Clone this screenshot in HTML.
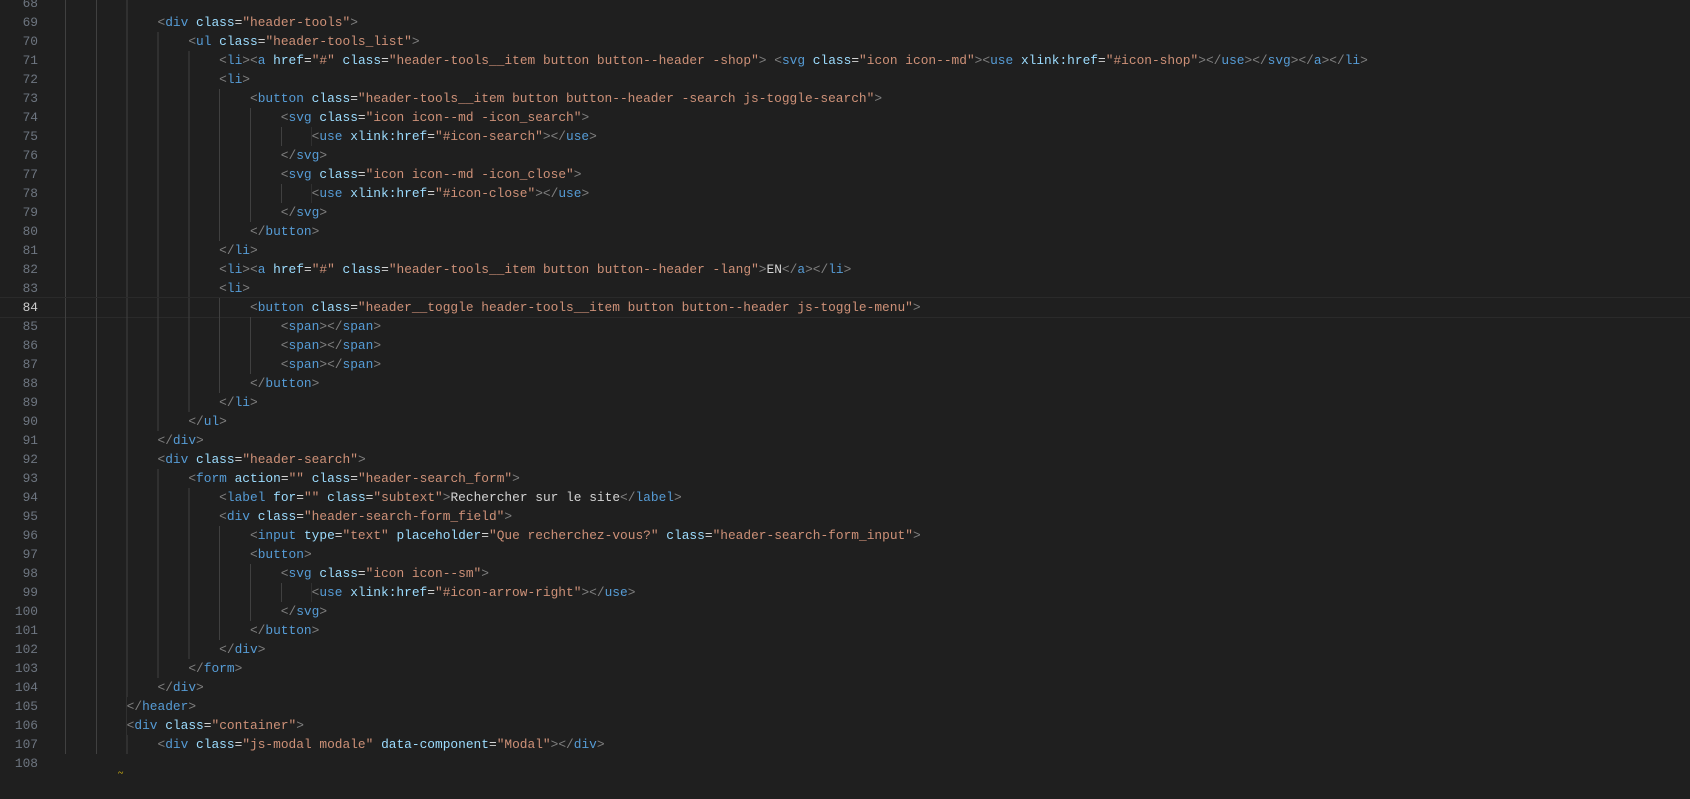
<!DOCTYPE html>
<html><head><meta charset="utf-8"><style>
html,body{margin:0;padding:0;background:#1f1f1f;width:1690px;height:799px;overflow:hidden}
.ed{position:absolute;left:0;top:-6px;width:1690px;font-family:"Liberation Mono",monospace;font-size:12.85px;color:#d4d4d4}
.l{position:relative;height:19px;line-height:19px;white-space:pre}
.n{position:absolute;left:0;width:38px;text-align:right;color:#6e7681}
.c{position:absolute;left:65px}
.g{display:inline-block;height:19px;vertical-align:top;background:repeating-linear-gradient(to right,#404040 0 1px,transparent 1px 4ch)}
.cur{border-top:1px solid #2a2a2a;border-bottom:1px solid #2a2a2a;margin:-1px 0}
.cur .n{color:#cccccc}
.p{color:#808080}.t{color:#569cd6}.a{color:#9cdcfe}.s{color:#ce9178}
.sq{position:absolute;left:118px;top:768px;color:#e2c010;font-size:10px}
</style></head><body>
<div class="ed">
<div class="l"><span class="n">68</span><span class="c"><span class="g" style="width:12ch"></span></span></div>
<div class="l"><span class="n">69</span><span class="c"><span class="g" style="width:12ch"></span><span class="p">&lt;</span><span class="t">div</span> <span class="a">class</span>=<span class="s">"header-tools"</span><span class="p">&gt;</span></span></div>
<div class="l"><span class="n">70</span><span class="c"><span class="g" style="width:16ch"></span><span class="p">&lt;</span><span class="t">ul</span> <span class="a">class</span>=<span class="s">"header-tools_list"</span><span class="p">&gt;</span></span></div>
<div class="l"><span class="n">71</span><span class="c"><span class="g" style="width:20ch"></span><span class="p">&lt;</span><span class="t">li</span><span class="p">&gt;&lt;</span><span class="t">a</span> <span class="a">href</span>=<span class="s">"#"</span> <span class="a">class</span>=<span class="s">"header-tools__item button button--header -shop"</span><span class="p">&gt;</span> <span class="p">&lt;</span><span class="t">svg</span> <span class="a">class</span>=<span class="s">"icon icon--md"</span><span class="p">&gt;&lt;</span><span class="t">use</span> <span class="a">xlink:href</span>=<span class="s">"#icon-shop"</span><span class="p">&gt;&lt;/</span><span class="t">use</span><span class="p">&gt;&lt;/</span><span class="t">svg</span><span class="p">&gt;&lt;/</span><span class="t">a</span><span class="p">&gt;&lt;/</span><span class="t">li</span><span class="p">&gt;</span></span></div>
<div class="l"><span class="n">72</span><span class="c"><span class="g" style="width:20ch"></span><span class="p">&lt;</span><span class="t">li</span><span class="p">&gt;</span></span></div>
<div class="l"><span class="n">73</span><span class="c"><span class="g" style="width:24ch"></span><span class="p">&lt;</span><span class="t">button</span> <span class="a">class</span>=<span class="s">"header-tools__item button button--header -search js-toggle-search"</span><span class="p">&gt;</span></span></div>
<div class="l"><span class="n">74</span><span class="c"><span class="g" style="width:28ch"></span><span class="p">&lt;</span><span class="t">svg</span> <span class="a">class</span>=<span class="s">"icon icon--md -icon_search"</span><span class="p">&gt;</span></span></div>
<div class="l"><span class="n">75</span><span class="c"><span class="g" style="width:32ch"></span><span class="p">&lt;</span><span class="t">use</span> <span class="a">xlink:href</span>=<span class="s">"#icon-search"</span><span class="p">&gt;&lt;/</span><span class="t">use</span><span class="p">&gt;</span></span></div>
<div class="l"><span class="n">76</span><span class="c"><span class="g" style="width:28ch"></span><span class="p">&lt;/</span><span class="t">svg</span><span class="p">&gt;</span></span></div>
<div class="l"><span class="n">77</span><span class="c"><span class="g" style="width:28ch"></span><span class="p">&lt;</span><span class="t">svg</span> <span class="a">class</span>=<span class="s">"icon icon--md -icon_close"</span><span class="p">&gt;</span></span></div>
<div class="l"><span class="n">78</span><span class="c"><span class="g" style="width:32ch"></span><span class="p">&lt;</span><span class="t">use</span> <span class="a">xlink:href</span>=<span class="s">"#icon-close"</span><span class="p">&gt;&lt;/</span><span class="t">use</span><span class="p">&gt;</span></span></div>
<div class="l"><span class="n">79</span><span class="c"><span class="g" style="width:28ch"></span><span class="p">&lt;/</span><span class="t">svg</span><span class="p">&gt;</span></span></div>
<div class="l"><span class="n">80</span><span class="c"><span class="g" style="width:24ch"></span><span class="p">&lt;/</span><span class="t">button</span><span class="p">&gt;</span></span></div>
<div class="l"><span class="n">81</span><span class="c"><span class="g" style="width:20ch"></span><span class="p">&lt;/</span><span class="t">li</span><span class="p">&gt;</span></span></div>
<div class="l"><span class="n">82</span><span class="c"><span class="g" style="width:20ch"></span><span class="p">&lt;</span><span class="t">li</span><span class="p">&gt;&lt;</span><span class="t">a</span> <span class="a">href</span>=<span class="s">"#"</span> <span class="a">class</span>=<span class="s">"header-tools__item button button--header -lang"</span><span class="p">&gt;</span>EN<span class="p">&lt;/</span><span class="t">a</span><span class="p">&gt;&lt;/</span><span class="t">li</span><span class="p">&gt;</span></span></div>
<div class="l"><span class="n">83</span><span class="c"><span class="g" style="width:20ch"></span><span class="p">&lt;</span><span class="t">li</span><span class="p">&gt;</span></span></div>
<div class="l cur"><span class="n">84</span><span class="c"><span class="g" style="width:24ch"></span><span class="p">&lt;</span><span class="t">button</span> <span class="a">class</span>=<span class="s">"header__toggle header-tools__item button button--header js-toggle-menu"</span><span class="p">&gt;</span></span></div>
<div class="l"><span class="n">85</span><span class="c"><span class="g" style="width:28ch"></span><span class="p">&lt;</span><span class="t">span</span><span class="p">&gt;&lt;/</span><span class="t">span</span><span class="p">&gt;</span></span></div>
<div class="l"><span class="n">86</span><span class="c"><span class="g" style="width:28ch"></span><span class="p">&lt;</span><span class="t">span</span><span class="p">&gt;&lt;/</span><span class="t">span</span><span class="p">&gt;</span></span></div>
<div class="l"><span class="n">87</span><span class="c"><span class="g" style="width:28ch"></span><span class="p">&lt;</span><span class="t">span</span><span class="p">&gt;&lt;/</span><span class="t">span</span><span class="p">&gt;</span></span></div>
<div class="l"><span class="n">88</span><span class="c"><span class="g" style="width:24ch"></span><span class="p">&lt;/</span><span class="t">button</span><span class="p">&gt;</span></span></div>
<div class="l"><span class="n">89</span><span class="c"><span class="g" style="width:20ch"></span><span class="p">&lt;/</span><span class="t">li</span><span class="p">&gt;</span></span></div>
<div class="l"><span class="n">90</span><span class="c"><span class="g" style="width:16ch"></span><span class="p">&lt;/</span><span class="t">ul</span><span class="p">&gt;</span></span></div>
<div class="l"><span class="n">91</span><span class="c"><span class="g" style="width:12ch"></span><span class="p">&lt;/</span><span class="t">div</span><span class="p">&gt;</span></span></div>
<div class="l"><span class="n">92</span><span class="c"><span class="g" style="width:12ch"></span><span class="p">&lt;</span><span class="t">div</span> <span class="a">class</span>=<span class="s">"header-search"</span><span class="p">&gt;</span></span></div>
<div class="l"><span class="n">93</span><span class="c"><span class="g" style="width:16ch"></span><span class="p">&lt;</span><span class="t">form</span> <span class="a">action</span>=<span class="s">""</span> <span class="a">class</span>=<span class="s">"header-search_form"</span><span class="p">&gt;</span></span></div>
<div class="l"><span class="n">94</span><span class="c"><span class="g" style="width:20ch"></span><span class="p">&lt;</span><span class="t">label</span> <span class="a">for</span>=<span class="s">""</span> <span class="a">class</span>=<span class="s">"subtext"</span><span class="p">&gt;</span>Rechercher sur le site<span class="p">&lt;/</span><span class="t">label</span><span class="p">&gt;</span></span></div>
<div class="l"><span class="n">95</span><span class="c"><span class="g" style="width:20ch"></span><span class="p">&lt;</span><span class="t">div</span> <span class="a">class</span>=<span class="s">"header-search-form_field"</span><span class="p">&gt;</span></span></div>
<div class="l"><span class="n">96</span><span class="c"><span class="g" style="width:24ch"></span><span class="p">&lt;</span><span class="t">input</span> <span class="a">type</span>=<span class="s">"text"</span> <span class="a">placeholder</span>=<span class="s">"Que recherchez-vous?"</span> <span class="a">class</span>=<span class="s">"header-search-form_input"</span><span class="p">&gt;</span></span></div>
<div class="l"><span class="n">97</span><span class="c"><span class="g" style="width:24ch"></span><span class="p">&lt;</span><span class="t">button</span><span class="p">&gt;</span></span></div>
<div class="l"><span class="n">98</span><span class="c"><span class="g" style="width:28ch"></span><span class="p">&lt;</span><span class="t">svg</span> <span class="a">class</span>=<span class="s">"icon icon--sm"</span><span class="p">&gt;</span></span></div>
<div class="l"><span class="n">99</span><span class="c"><span class="g" style="width:32ch"></span><span class="p">&lt;</span><span class="t">use</span> <span class="a">xlink:href</span>=<span class="s">"#icon-arrow-right"</span><span class="p">&gt;&lt;/</span><span class="t">use</span><span class="p">&gt;</span></span></div>
<div class="l"><span class="n">100</span><span class="c"><span class="g" style="width:28ch"></span><span class="p">&lt;/</span><span class="t">svg</span><span class="p">&gt;</span></span></div>
<div class="l"><span class="n">101</span><span class="c"><span class="g" style="width:24ch"></span><span class="p">&lt;/</span><span class="t">button</span><span class="p">&gt;</span></span></div>
<div class="l"><span class="n">102</span><span class="c"><span class="g" style="width:20ch"></span><span class="p">&lt;/</span><span class="t">div</span><span class="p">&gt;</span></span></div>
<div class="l"><span class="n">103</span><span class="c"><span class="g" style="width:16ch"></span><span class="p">&lt;/</span><span class="t">form</span><span class="p">&gt;</span></span></div>
<div class="l"><span class="n">104</span><span class="c"><span class="g" style="width:12ch"></span><span class="p">&lt;/</span><span class="t">div</span><span class="p">&gt;</span></span></div>
<div class="l"><span class="n">105</span><span class="c"><span class="g" style="width:8ch"></span><span class="p">&lt;/</span><span class="t">header</span><span class="p">&gt;</span></span></div>
<div class="l"><span class="n">106</span><span class="c"><span class="g" style="width:8ch"></span><span class="p">&lt;</span><span class="t">div</span> <span class="a">class</span>=<span class="s">"container"</span><span class="p">&gt;</span></span></div>
<div class="l"><span class="n">107</span><span class="c"><span class="g" style="width:12ch"></span><span class="p">&lt;</span><span class="t">div</span> <span class="a">class</span>=<span class="s">"js-modal modale"</span> <span class="a">data-component</span>=<span class="s">"Modal"</span><span class="p">&gt;&lt;/</span><span class="t">div</span><span class="p">&gt;</span></span></div>
<div class="l"><span class="n">108</span><span class="c"></span></div>
</div>
<div class="sq">~</div>
</body></html>
